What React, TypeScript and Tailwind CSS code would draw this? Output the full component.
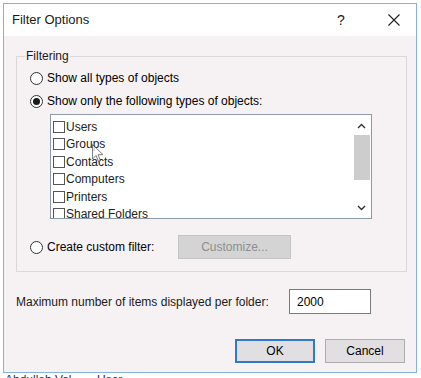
import React from "react";

const items = ["Users", "Groups", "Contacts", "Computers", "Printers", "Shared Folders"];

function Radio({ checked }: { checked?: boolean }) {
  return (
    <span className="w-[13px] h-[13px] rounded-full border border-[#333333] bg-white flex items-center justify-center shrink-0">
      {checked && <span className="w-[7px] h-[7px] rounded-full bg-[#1a1a1a]" />}
    </span>
  );
}

export default function App() {
  return (
    <div
      className="w-[421px] h-[378px] bg-white overflow-hidden text-[12px] text-black leading-[14px]"
      style={{ fontFamily: '"Liberation Sans", Arial, sans-serif' }}
    >
      {/* ── Window behind (top) ── */}
      <div className="h-[3px] overflow-hidden pl-[4px]">
        <div className="-mt-[11px] text-[12px] text-[#444]">A&nbsp;&nbsp;&nbsp;&nbsp;&nbsp;&nbsp;&nbsp;&nbsp;&nbsp;&nbsp;&nbsp;B&nbsp;&nbsp;&nbsp;&nbsp;&nbsp;&nbsp;&nbsp;&nbsp;&nbsp;&nbsp;&nbsp;&nbsp;&nbsp;&nbsp;&nbsp;&nbsp;&nbsp;&nbsp;&nbsp;U</div>
      </div>

      {/* ── Dialog ── */}
      <div className="ml-[3px] w-[414px] h-[370px] border border-[#86b2dd] bg-[#f6f2f4] flex flex-col">
        {/* title bar */}
        <div className="h-[32px] bg-white flex items-center pl-[8px] text-[13px] text-[#1a1a1a]">
          <span>Filter Options</span>
          <span className="ml-auto w-[10px] text-center text-[14px] mr-[42px]">?</span>
          <svg width="12" height="12" viewBox="0 0 12 12" className="mr-[16px]">
            <path d="M0.5 0.5 L11.5 11.5 M11.5 0.5 L0.5 11.5" stroke="#222" strokeWidth="1.1" />
          </svg>
        </div>

        <div className="pl-[12px] flex flex-col">
          {/* ── Filtering group ── */}
          <div className="relative mt-[20px] w-[391px] h-[216px] border border-[#dcd8da]">
            <span className="absolute -top-[8px] left-[8px] px-[1px] bg-[#f6f2f4] text-[#1a1a1a]">Filtering</span>

            <div className="pl-[13px] pt-[13px] flex flex-col">
              <div className="h-[16px] flex items-center gap-[4px]">
                <Radio />
                <span>Show all types of objects</span>
              </div>
              <div className="h-[16px] mt-[7px] flex items-center gap-[4px]">
                <Radio checked />
                <span>Show only the following types of objects:</span>
              </div>

              {/* list box */}
              <div className="relative ml-[20px] mt-[5px] w-[322px] h-[105px] border border-[#8f9aa8] bg-white flex overflow-hidden">
                <div className="flex-1 pt-[3px] overflow-hidden">
                  {items.map((it) => (
                    <div key={it} className="h-[17.5px] flex items-center pl-[2px]">
                      <span className="w-[12px] h-[12px] border border-[#555] bg-white shrink-0" />
                      <span className="ml-[1px] text-[#222]">{it}</span>
                    </div>
                  ))}
                </div>
                <div className="w-[17px] mr-[1px] flex flex-col items-center bg-white">
                  <svg width="9" height="6" viewBox="0 0 9 6" className="mt-[8px]">
                    <path d="M1 5 L4.5 1.5 L8 5" stroke="#333" strokeWidth="1.4" fill="none" />
                  </svg>
                  <div className="w-[16px] h-[45px] mt-[6px] bg-[#cdcdcd]" />
                  <svg width="9" height="6" viewBox="0 0 9 6" className="mt-auto mb-[7px]">
                    <path d="M1 1 L4.5 4.5 L8 1" stroke="#333" strokeWidth="1.4" fill="none" />
                  </svg>
                </div>

                {/* mouse pointer */}
                <svg width="12" height="19" viewBox="0 0 12 19" className="absolute left-[41px] top-[29px] opacity-70">
                  <path d="M0.5 0.5 L0.5 15 L4 11.5 L6.5 17.5 L8.5 16.5 L6 10.7 L11 10.7 Z" fill="#fff" stroke="#444" strokeWidth="1" />
                </svg>
              </div>

              <div className="h-[16px] mt-[20px] flex items-center gap-[4px]">
                <Radio />
                <span className="w-[127px]">Create custom filter:</span>
                <div className="w-[113px] h-[24px] border border-[#c4c4c4] bg-[#d4d4d4] flex items-center justify-center text-[#8e8e8e]">
                  Customize...
                </div>
              </div>
            </div>
          </div>

          {/* ── Max items row ── */}
          <div className="mt-[17px] flex items-center">
            <span className="w-[273px] text-[#1a1a1a]">Maximum number of items displayed per folder:</span>
            <div className="w-[82px] h-[25px] border border-[#7a7a7a] bg-white flex items-center pl-[7px]">2000</div>
          </div>

          {/* ── Buttons ── */}
          <div className="mt-[25px] flex justify-end gap-[10px] pr-[11px]">
            <button className="w-[80px] h-[24px] border-2 border-[#2f79c9] bg-[#e1dfe1] flex items-center justify-center">OK</button>
            <button className="w-[80px] h-[24px] border border-[#adadad] bg-[#e1dfe1] flex items-center justify-center">Cancel</button>
          </div>
        </div>
      </div>

      {/* ── Window behind (bottom) ── */}
      <div className="h-[5px] overflow-hidden pl-[5px] flex text-[#333]">
        <span className="w-[92px]">Abdullah Val</span>
        <span>User</span>
      </div>
    </div>
  );
}
